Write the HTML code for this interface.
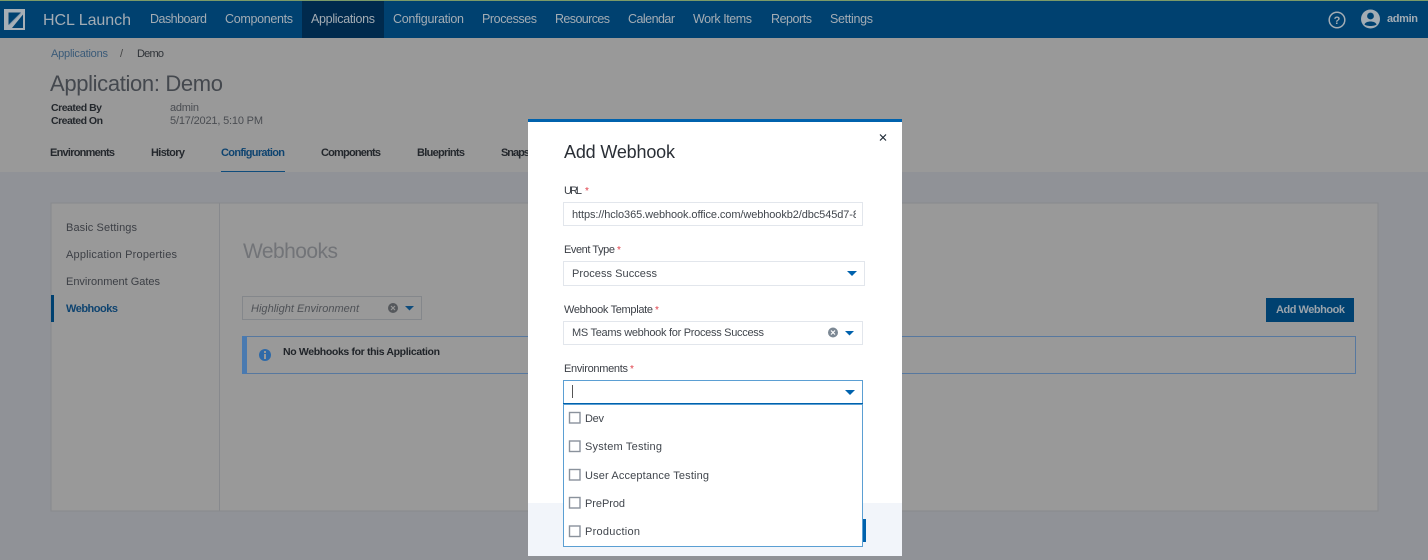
<!DOCTYPE html>
<html lang="en"><head><meta charset="utf-8"><title>Add Webhook</title>
<style>
html,body{margin:0;padding:0;background:#999}
svg{display:block}
text{font-family:"Liberation Sans",Arial,sans-serif;font-size:11px}
.nav{font-size:12.5px;fill:#a3acb4}
.b{font-weight:bold}
.lb{fill:#3b3f46;font-size:11px}
.in{fill:#41464d;font-size:11px}
.req{fill:#e0404a;font-size:10px}
.cb{fill:#fff;stroke:#8a929c;stroke-width:1.4}
</style></head><body>
<svg width="1428" height="560" viewBox="0 0 1428 560" xmlns="http://www.w3.org/2000/svg">
<rect width="1428" height="560" fill="#999999"/>
<rect y="172" width="1428" height="388" fill="#909297"/>
<rect x="51" y="203" width="1327" height="308" fill="#999999" stroke="#87898d"/>
<line x1="219.500" y1="203" x2="219.500" y2="511" stroke="#87898d"/>
<!-- nav -->
<rect width="1428" height="38" fill="#004170"/>
<rect width="1428" height="1" fill="#7b9a68"/>
<rect x="302" y="1" width="82" height="37" fill="#002a4d"/>
<rect x="4" y="9" width="21" height="21" fill="#a7afb6"/>
<path d="M8.500 12.500H21L8.500 25Z" fill="#004170"/>
<path d="M23 14.500V28H12Z" fill="#004170"/>
<path d="M9 25L21 13" stroke="#7f95a8" stroke-width="1"/>
<text x="43" y="25" style="font-size:16px" fill="#a3acb4" textLength="88">HCL Launch</text>
<text class="nav" x="150" y="23" textLength="57">Dashboard</text>
<text class="nav" x="225" y="23" textLength="68">Components</text>
<text class="nav" x="311" y="23" textLength="64">Applications</text>
<text class="nav" x="393" y="23" textLength="71">Configuration</text>
<text class="nav" x="482" y="23" textLength="55">Processes</text>
<text class="nav" x="555" y="23" textLength="55">Resources</text>
<text class="nav" x="628" y="23" textLength="47">Calendar</text>
<text class="nav" x="693" y="23" textLength="59">Work Items</text>
<text class="nav" x="771" y="23" textLength="41">Reports</text>
<text class="nav" x="830" y="23" textLength="43">Settings</text>
<circle cx="1337" cy="20" r="7.800" fill="none" stroke="#a3acb4" stroke-width="1.500"/>
<text x="1337" y="24" text-anchor="middle" class="b" style="font-size:11px" fill="#a3acb4">?</text>
<circle cx="1370.500" cy="19" r="9.500" fill="#a3acb4"/>
<circle cx="1370.500" cy="16" r="3.400" fill="#004170"/>
<path d="M1364.500 24.500 C1365.500 20.500 1375.500 20.500 1376.500 24.500 C1374.500 26.500 1366.500 26.500 1364.500 24.500Z" fill="#004170"/>
<text x="1387" y="22" class="b" style="font-size:11px" fill="#a3acb4" textLength="31">admin</text>
<!-- header -->
<text x="51" y="57" fill="#3a5a78" textLength="57">Applications</text>
<text x="120" y="57" fill="#444" textLength="4">/</text>
<text x="137" y="57" fill="#2f3338" textLength="27">Demo</text>
<text x="50" y="91" style="font-size:22px" fill="#44484e" textLength="173">Application: Demo</text>
<text x="51" y="111" class="b" style="font-size:10.500px" fill="#24282d" textLength="51">Created By</text>
<text x="51" y="124" class="b" style="font-size:10.500px" fill="#24282d" textLength="52">Created On</text>
<text x="170" y="111" fill="#4a4d52" textLength="29">admin</text>
<text x="170" y="124" fill="#4a4d52" textLength="93">5/17/2021, 5:10 PM</text>
<g class="b" style="font-size:10.500px;font-weight:bold" fill="#24282d">
<text x="50" y="156" textLength="65">Environments</text>
<text x="151" y="156" textLength="34">History</text>
<text x="221" y="156" textLength="64" fill="#0f4470">Configuration</text>
<text x="321" y="156" textLength="60">Components</text>
<text x="417" y="156" textLength="48">Blueprints</text>
<text x="501" y="156" textLength="48">Snapshots</text>
</g>
<rect x="221" y="171" width="64" height="1" fill="#0f4c7c"/>
<!-- sidebar -->
<g fill="#3c3f45" style="font-size:11px">
<text x="66" y="231" textLength="71">Basic Settings</text>
<text x="66" y="258" textLength="111">Application Properties</text>
<text x="66" y="285" textLength="94">Environment Gates</text>
</g>
<text x="66" y="312" class="b" fill="#0f4470" textLength="52">Webhooks</text>
<rect x="51" y="295" width="3" height="27" fill="#004170"/>
<!-- content -->
<text x="243" y="258" style="font-size:21px" fill="#727478" textLength="95">Webhooks</text>
<rect x="242.500" y="296.500" width="179" height="23" fill="none" stroke="#84878b"/>
<text x="251" y="312" fill="#4f5257" style="font-size:11px;font-style:italic" textLength="108">Highlight Environment</text>
<circle cx="393" cy="308" r="5" fill="#55585c"/>
<path d="M391 306l4 4m0-4l-4 4" stroke="#999" stroke-width="1.200"/>
<path d="M405 306h9l-4.500 4.500z" fill="#0f4c7c"/>
<rect x="1266" y="298" width="88" height="24" fill="#004170"/>
<text x="1276" y="313" class="b" fill="#9aa3ab" textLength="69">Add Webhook</text>
<rect x="243" y="336.500" width="1112.500" height="37" fill="none" stroke="#57789f"/>
<rect x="242" y="336" width="5" height="38" fill="#4a7ab0"/>
<circle cx="265" cy="355" r="6" fill="#2f6aa8"/>
<rect x="264" y="354" width="2" height="5" fill="#999"/>
<rect x="264" y="351" width="2" height="2" fill="#999"/>
<text x="283" y="355" class="b" fill="#1f2328" style="font-size:10.500px" textLength="157">No Webhooks for this Application</text>
<!-- modal -->
<rect x="528" y="120" width="374" height="436" fill="#ffffff"/>
<rect x="528" y="119" width="374" height="3" fill="#0062ad"/>
<rect x="528" y="503" width="374" height="53" fill="#f2f5fa"/>
<path d="M880 134.500l6 6m0-6l-6 6" stroke="#1e2a36" stroke-width="1.200"/>
<text x="564" y="158" style="font-size:18px" fill="#2a2f36" textLength="111">Add Webhook</text>
<text x="564" y="194" class="lb" textLength="18">URL</text><text x="585" y="194" class="req">*</text>
<rect x="563.500" y="202.500" width="299" height="23" fill="#fff" stroke="#e2e6ec"/>
<svg x="572" y="205" width="284" height="20"><text x="0" y="13" class="in" textLength="287">https://hclo365.webhook.office.com/webhookb2/dbc545d7-8</text></svg>
<text x="564" y="253" class="lb" textLength="51">Event Type</text><text x="617" y="253" class="req">*</text>
<rect x="563.500" y="261.500" width="301" height="24" fill="#fff" stroke="#e2e6ec"/>
<text x="572" y="277" class="in" textLength="85">Process Success</text>
<path d="M847 271h10l-5 5z" fill="#0062ad"/>
<text x="564" y="313" class="lb" textLength="89">Webhook Template</text><text x="655" y="313" class="req">*</text>
<rect x="563.500" y="321.500" width="299" height="23" fill="#fff" stroke="#e2e6ec"/>
<text x="572" y="336" class="in" textLength="192">MS Teams webhook for Process Success</text>
<circle cx="833" cy="332.500" r="5" fill="#7c8894"/>
<path d="M831 330.500l4 4m0-4l-4 4" stroke="#fff" stroke-width="1.200"/>
<path d="M845 331h9l-4.500 4.500z" fill="#0062ad"/>
<text x="564" y="372" class="lb" textLength="64">Environments</text><text x="630" y="372" class="req">*</text>
<rect x="563.500" y="380.500" width="299" height="23" fill="#fff" stroke="#5b9fd3"/>
<line x1="563" y1="403.500" x2="863" y2="403.500" stroke="#0062ad"/>
<rect x="572" y="385" width="1" height="13" fill="#555"/>
<path d="M845 390h10l-5 5z" fill="#0062ad"/>
<rect x="859" y="519" width="7" height="23" fill="#0062ad"/>
<rect x="563.500" y="404.500" width="299" height="142" fill="#fff" stroke="#5b9fd3"/>
<rect class="cb" x="569.500" y="412.500" width="10.500" height="10.500"/>
<rect class="cb" x="569.500" y="441" width="10.500" height="10.500"/>
<rect class="cb" x="569.500" y="469.500" width="10.500" height="10.500"/>
<rect class="cb" x="569.500" y="497.500" width="10.500" height="10.500"/>
<rect class="cb" x="569.500" y="526" width="10.500" height="10.500"/>
<text x="585" y="422" class="in" textLength="19">Dev</text>
<text x="585" y="450" class="in" textLength="77">System Testing</text>
<text x="585" y="479" class="in" textLength="124">User Acceptance Testing</text>
<text x="585" y="507" class="in" textLength="40">PreProd</text>
<text x="585" y="535" class="in" textLength="55">Production</text>
</svg>
</body></html>
